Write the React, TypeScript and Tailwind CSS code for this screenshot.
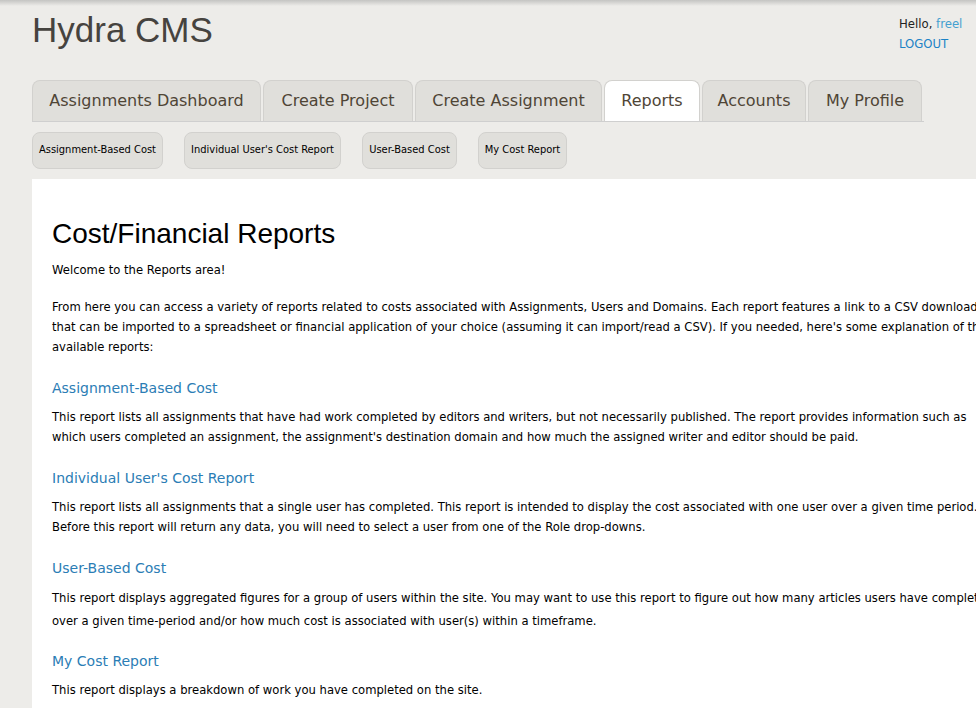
import React from "react";

const body = { fontFamily: '"DejaVu Sans", Verdana, sans-serif' };
const cond = { fontFamily: '"DejaVu Sans Condensed", "DejaVu Sans", sans-serif' };
const arial = { fontFamily: '"Liberation Sans", Arial, sans-serif' };

const tabs = [
  { label: "Assignments Dashboard", w: "w-[229px]" },
  { label: "Create Project", w: "w-[150px]" },
  { label: "Create Assignment", w: "w-[187px]" },
  { label: "Reports", w: "w-[96px]", active: true },
  { label: "Accounts", w: "w-[104px]" },
  { label: "My Profile", w: "w-[114px]" },
];

const subs = [
  { label: "Assignment-Based Cost", w: "w-[131px]" },
  { label: "Individual User's Cost Report", w: "w-[157px]" },
  { label: "User-Based Cost", w: "w-[95px]" },
  { label: "My Cost Report", w: "w-[89px]" },
];

export default function App() {
  return (
    <div className="relative w-[976px] h-[708px] overflow-hidden bg-[#edece9]" style={body}>
      <div className="absolute top-0 left-0 right-0 h-[6px] bg-gradient-to-b from-[#c4c4c2] to-[#edece9]" />
      <div className="flex flex-col pl-[32px]">
        <div className="flex justify-between h-[80px]">
          <h1 className="pt-[8px] text-[35px] leading-[44px] text-[#46433f]" style={arial}>
            Hydra CMS
          </h1>
          <div className="w-[77px] pt-[14px] text-[13px] leading-[20px] whitespace-nowrap overflow-hidden" style={cond}>
            <div className="text-[#222]">
              Hello, <span className="text-[#44a0d0]">freel</span>
            </div>
            <div className="text-[#1c82c6]">LOGOUT</div>
          </div>
        </div>
        <div className="flex gap-[2px] w-[892px] border-b border-[#cfcfcf] h-[42px]">
          {tabs.map((t) => (
            <div
              key={t.label}
              className={`${t.w} h-[41px] flex items-center justify-center rounded-t-[8px] border border-b-0 border-[#d2d1ce] text-[16px] text-[#4f4536] ${
                t.active ? "bg-white" : "bg-[#e0dfdb]"
              }`}
            >
              {t.label}
            </div>
          ))}
        </div>
        <div className="flex gap-[21px] pt-[10px] h-[57px]" style={cond}>
          {subs.map((s) => (
            <div
              key={s.label}
              className={`${s.w} h-[37px] flex items-center justify-center rounded-[8px] border border-[#d2d1ce] bg-[#e0dfdb] text-[11px] text-black`}
            >
              {s.label}
            </div>
          ))}
        </div>
        <div className="bg-white h-[600px] pl-[20px] pt-[38px] text-[11.6px] text-black whitespace-nowrap">
          <h2 className="text-[28px] leading-[34px] text-black" style={arial}>
            Cost/Financial Reports
          </h2>
          <p className="mt-[9px] leading-[20px]">Welcome to the Reports area!</p>
          <p className="mt-[17px] leading-[20px]">
            From here you can access a variety of reports related to costs associated with Assignments, Users and Domains. Each report features a link to a CSV download
            <br />
            that can be imported to a spreadsheet or financial application of your choice (assuming it can import/read a CSV). If you needed, here's some explanation of the
            <br />
            available reports:
          </p>
          <h3 className="mt-[21px] text-[14px] leading-[20px] text-[#2b7db5]">Assignment-Based Cost</h3>
          <p className="mt-[9px] leading-[20px]">
            This report lists all assignments that have had work completed by editors and writers, but not necessarily published. The report provides information such as
            <br />
            which users completed an assignment, the assignment's destination domain and how much the assigned writer and editor should be paid.
          </p>
          <h3 className="mt-[21px] text-[14px] leading-[20px] text-[#2b7db5]">Individual User's Cost Report</h3>
          <p className="mt-[9px] leading-[20px]">
            This report lists all assignments that a single user has completed. This report is intended to display the cost associated with one user over a given time period.
            <br />
            Before this report will return any data, you will need to select a user from one of the Role drop-downs.
          </p>
          <h3 className="mt-[21px] text-[14px] leading-[20px] text-[#2b7db5]">User-Based Cost</h3>
          <p className="mt-[9px] leading-[23px]">
            This report displays aggregated figures for a group of users within the site. You may want to use this report to figure out how many articles users have completed
            <br />
            over a given time-period and/or how much cost is associated with user(s) within a timeframe.
          </p>
          <h3 className="mt-[18px] text-[14px] leading-[20px] text-[#2b7db5]">My Cost Report</h3>
          <p className="mt-[9px] leading-[20px]">This report displays a breakdown of work you have completed on the site.</p>
        </div>
      </div>
    </div>
  );
}
